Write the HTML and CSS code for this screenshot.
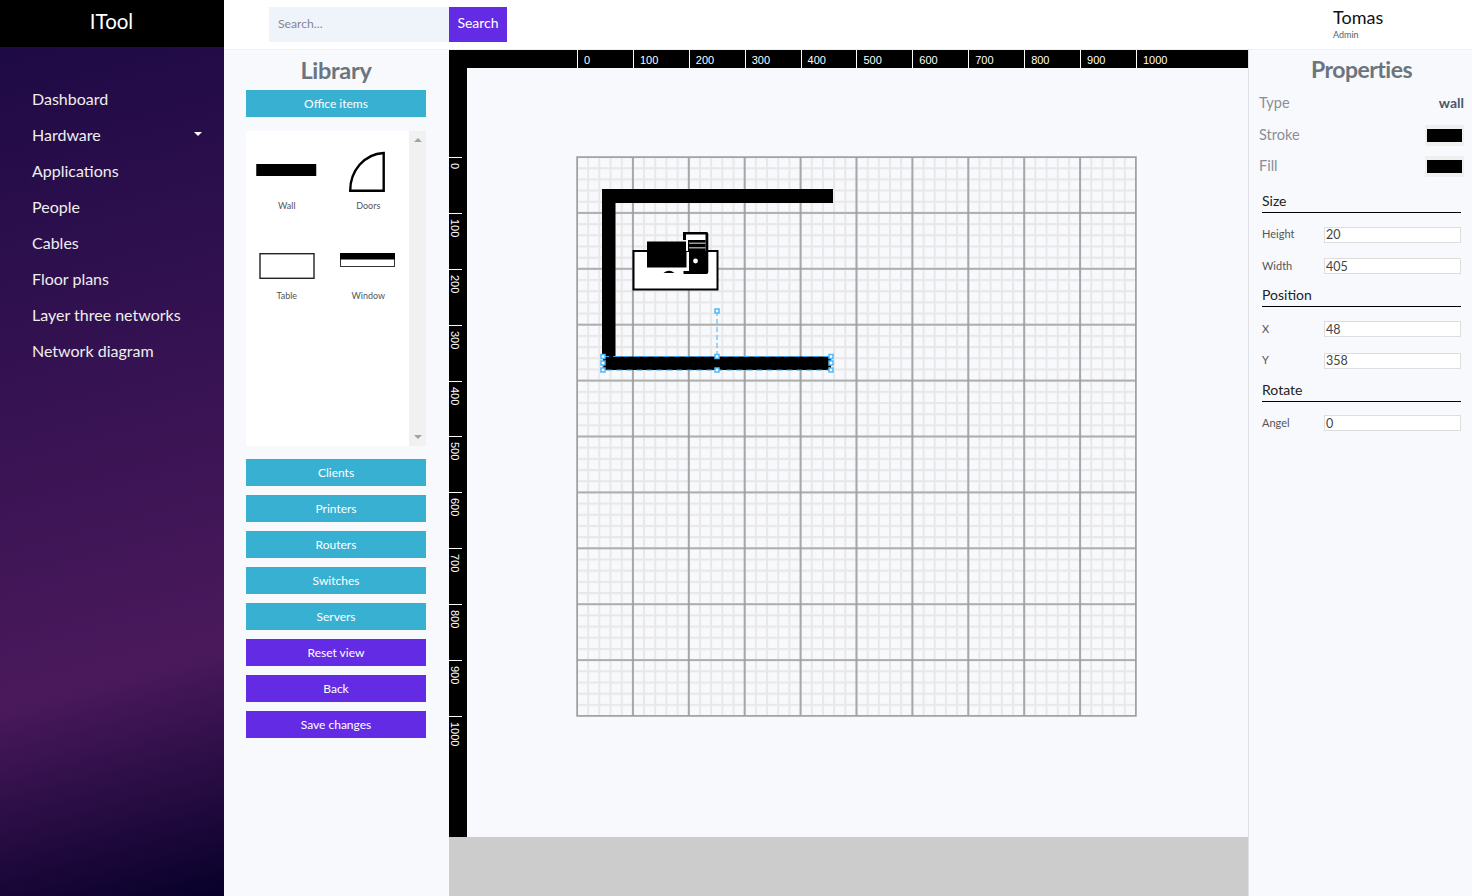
FILE: index.html
```html
<html>
	<head>
		<title>ITool - Floor plan</title>
		<link rel="stylesheet" href="styles.css">
	</head>
	<body>
		<div id="sidebar">
			<div class="brand">ITool</div>
			<ul class="nav">
				<li>Dashboard</li>
				<li class="has_caret">Hardware<span class="caret"></span></li>
				<li>Applications</li>
				<li>People</li>
				<li>Cables</li>
				<li>Floor plans</li>
				<li>Layer three networks</li>
				<li>Network diagram</li>
			</ul>
		</div>
		<div id="page">
			<div id="topbar">
				<div class="search">
					<input type="text" placeholder="Search...">
					<button>Search</button>
				</div>
				<div class="user">
					<div class="user_name">Tomas</div>
					<div class="user_role">Admin</div>
				</div>
			</div>
			<div id="main">
				<div id="library">
					<h2>Library</h2>
					<div class="btn btn_info">Office items</div>
					<div class="shapes">
						<div class="shape_grid">
							<div class="shape">
								<svg width="60" height="50"><rect x="-0.75" y="17" width="60" height="12"></rect></svg>
								<span>Wall</span>
							</div>
							<div class="shape">
								<svg width="60" height="50"><path d="M45.7 6 V43.7 H12.2 C12.2 24 26 7 45.7 6 Z" fill="#fff" stroke="#000" stroke-width="2.4"></path></svg>
								<span>Doors</span>
							</div>
							<div class="shape">
								<svg width="60" height="50"><rect x="3" y="16.7" width="54" height="24.6" fill="#fff" stroke="#222" stroke-width="1.4"></rect></svg>
								<span>Table</span>
							</div>
							<div class="shape">
								<svg width="60" height="50"><rect x="2.5" y="16.5" width="54" height="13" fill="#fff" stroke="#333"></rect><rect x="2" y="16" width="55" height="6.5"></rect></svg>
								<span>Window</span>
							</div>
						</div>
						<div class="scroller">
							<span class="arrow_up"></span>
							<span class="arrow_down"></span>
						</div>
					</div>
					<div class="btn_list">
						<div class="btn btn_info">Clients</div>
						<div class="btn btn_info">Printers</div>
						<div class="btn btn_info">Routers</div>
						<div class="btn btn_info">Switches</div>
						<div class="btn btn_info">Servers</div>
						<div class="btn btn_main">Reset view</div>
						<div class="btn btn_main">Back</div>
						<div class="btn btn_main">Save changes</div>
					</div>
				</div>
				<div id="editor">
					<div class="ruler_top">
						<span>0</span><span>100</span><span>200</span><span>300</span><span>400</span><span>500</span><span>600</span><span>700</span><span>800</span><span>900</span><span>1000</span>
					</div>
					<div class="editor_body">
						<div class="ruler_left">
							<span>0</span><span>100</span><span>200</span><span>300</span><span>400</span><span>500</span><span>600</span><span>700</span><span>800</span><span>900</span><span>1000</span>
						</div>
						<div class="stage">
							<svg class="board" width="781" height="769">
								<defs>
									<pattern id="minor" x="109" y="88" width="11.18" height="11.18" patternUnits="userSpaceOnUse">
										<path d="M0 1 H11.18 M1 0 V11.18" fill="none" stroke="#e8e8e8" stroke-width="2"></path>
									</pattern>
									<pattern id="major" x="109" y="88" width="55.9" height="55.9" patternUnits="userSpaceOnUse">
										<path d="M0 1 H55.9 M1 0 V55.9" fill="none" stroke="#9c9c9c" stroke-width="1.7"></path>
									</pattern>
								</defs>
								<rect x="110" y="89" width="559" height="559" fill="url(#minor)"></rect>
								<rect x="110" y="89" width="559" height="559" fill="url(#major)"></rect>
								<rect x="110" y="89" width="559" height="559" fill="none" stroke="#a0a0a0" stroke-width="1.5"></rect>

								<rect x="135" y="121" width="231" height="14"></rect>
								<rect x="135" y="121" width="13.5" height="168"></rect>

								<rect x="166.5" y="183" width="84" height="38.5" fill="#fff" stroke="#000" stroke-width="2"></rect>
								<rect x="180" y="173.5" width="39.5" height="26"></rect>
								<path d="M196.5 205 Q202 200.5 207.5 205 Z"></path>
								<rect x="219" y="166" width="20" height="17" fill="#fff"></rect>
								<path d="M216 164 H239.5 Q241.3 164 241.3 166 V204 Q241.3 206 239.5 206 H216.5 V203 H222 V183 H238.5 V166.5 H219 V172 H216 Z"></path>
								<rect x="221" y="172" width="17.5" height="11"></rect>
								<rect x="222" y="174.5" width="16.5" height="1.5" fill="#999"></rect>
								<rect x="222" y="179" width="16.5" height="1.5" fill="#999"></rect>
								<circle cx="228.5" cy="193" r="2.4" fill="#fff"></circle>

								<rect x="136" y="288.5" width="228" height="13.5"></rect>
								<rect class="sel_box" x="136" y="288.5" width="228" height="13.5"></rect>
								<line class="sel_line" x1="250" y1="243" x2="250" y2="288"></line>
								<rect class="handle" x="248" y="241" width="4" height="4"></rect>
								<rect class="handle" x="134" y="286.5" width="4" height="4"></rect>
								<rect class="handle" x="134" y="293" width="4" height="4"></rect>
								<rect class="handle" x="134" y="300" width="4" height="4"></rect>
								<rect class="handle" x="248" y="286.5" width="4" height="4"></rect>
								<rect class="handle" x="248" y="300" width="4" height="4"></rect>
								<rect class="handle" x="362" y="286.5" width="4" height="4"></rect>
								<rect class="handle" x="362" y="293" width="4" height="4"></rect>
								<rect class="handle" x="362" y="300" width="4" height="4"></rect>
							</svg>
						</div>
					</div>
					<div class="editor_foot"></div>
				</div>
				<div id="properties">
					<h2>Properties</h2>
					<div class="prop_row prop_first"><span>Type</span><strong>wall</strong></div>
					<div class="prop_row prop_stroke"><span>Stroke</span><i class="swatch"></i></div>
					<div class="prop_row prop_fill"><span>Fill</span><i class="swatch"></i></div>

					<div class="group_title">Size</div>
					<div class="field"><label>Height</label><input type="text" value="20"></div>
					<div class="field"><label>Width</label><input type="text" value="405"></div>

					<div class="group_title">Position</div>
					<div class="field"><label>X</label><input type="text" value="48"></div>
					<div class="field"><label>Y</label><input type="text" value="358"></div>

					<div class="group_title">Rotate</div>
					<div class="field"><label>Angel</label><input type="text" value="0"></div>
				</div>
			</div>
		</div>
	</body>
</html>
```

FILE: styles.css
```css
html,body{
	margin:0;
	height:896px;
	overflow:hidden;
	font-family:Lato,"Open Sans",sans-serif;
	background:#f8f9fc;
}
body{
	display:flex;
}
#sidebar{
	width:224px;
	flex:none;
	background:linear-gradient(165deg,#1b0944 0%,#4a195c 74%,#07002a 100%);
}
.brand{
	height:47px;
	line-height:43px;
	background:#000;
	color:#fff;
	font-size:20.5px;
	text-align:center;
	padding-right:1px;
}
.nav{
	list-style:none;
	margin:0;
	padding:34px 0 0 32px;
	color:#eee;
	font-size:16px;
}
.nav li{
	height:36px;
	line-height:36px;
	position:relative;
}
.caret{
	position:absolute;
	left:162px;
	top:15px;
	border:4px solid transparent;
	border-top-color:#fff;
	border-bottom:0;
}
#page{
	flex:1;
	display:flex;
	flex-direction:column;
	min-width:0;
}
#topbar{
	height:49px;
	background:#fff;
	border-bottom:1px solid #eef0f5;
	display:flex;
	justify-content:space-between;
}
.search{
	display:flex;
	margin:7px 0 0 45px;
	height:35px;
}
.search input{
	width:180px;
	box-sizing:border-box;
	border:0;
	padding:0 9px 3px;
	background:#eff3fa;
	font:12.2px Lato,sans-serif;
}
.search input::placeholder{
	color:#858796;
}
.search button{
	width:58px;
	border:0;
	padding:0 0 5px;
	background:#632ce4;
	color:#fff;
	font:14px Lato,sans-serif;
}
.user{
	width:139px;
	padding-top:7px;
	color:#111;
}
.user_name{
	font-size:18px;
	line-height:21px;
}
.user_role{
	font-size:9px;
	line-height:14px;
	color:#5a5c69;
}
#main{
	flex:1;
	display:flex;
	min-height:0;
}
#library{
	width:225px;
	flex:none;
	box-sizing:border-box;
	padding:0 23px 0 22px;
}
#library h2,#properties h2{
	margin:0;
	color:#6c757d;
	font-weight:700;
	line-height:40px;
	text-align:center;
}
#library h2{
	height:40px;
	font-size:23.5px;
	letter-spacing:-0.3px;
}
.btn{
	height:27px;
	line-height:28px;
	color:#fff;
	font-size:12px;
	text-align:center;
}
.btn_info{
	background:#38b0d2;
}
.btn_main{
	background:#632ce4;
}
.btn_list{
	display:flex;
	flex-direction:column;
	gap:9px;
}
.shapes{
	height:315px;
	margin:14px 0 13px;
	background:#fff;
	display:flex;
}
.shape_grid{
	flex:1;
	display:grid;
	grid-template-columns:1fr 1fr;
	grid-auto-rows:90px;
	padding-top:16px;
}
.shape{
	display:flex;
	flex-direction:column;
	align-items:center;
	color:#555;
	font-size:9px;
}
.shape svg{
	display:block;
	overflow:visible;
}
.shape span{
	margin-top:3px;
	line-height:12px;
}
.scroller{
	width:17px;
	background:#f1f1f1;
	display:flex;
	flex-direction:column;
	justify-content:space-between;
	align-items:center;
	padding:7px 0;
}
.arrow_up,.arrow_down{
	border:4px solid transparent;
}
.arrow_up{
	border-bottom-color:#a3a3a3;
	border-top:0;
}
.arrow_down{
	border-top-color:#a3a3a3;
	border-bottom:0;
}
#editor{
	width:799px;
	flex:none;
	display:flex;
	flex-direction:column;
}
.ruler_top{
	height:18px;
	background:#000;
	display:flex;
	padding-left:128px;
}
.ruler_top span,.ruler_left span{
	box-sizing:border-box;
	color:#fff;
	font:11px "Liberation Sans",Arial,sans-serif;
}
.ruler_top span{
	width:55.9px;
	border-left:1px solid #fff;
	padding:4px 0 0 6px;
	line-height:12px;
}
.editor_body{
	height:769px;
	display:flex;
}
.ruler_left{
	width:18px;
	flex:none;
	background:#000;
	box-sizing:border-box;
	padding-top:89px;
}
.ruler_left span{
	display:block;
	height:55.9px;
	border-top:1px solid #fff;
	writing-mode:vertical-rl;
	padding:5px 1px 0 0;
	line-height:12px;
}
.stage{
	flex:1;
	background:#f8f9fc;
}
.board{
	display:block;
}
.sel_box{
	fill:none;
	stroke:#2aa7f2;
	stroke-width:1;
	stroke-dasharray:6 4;
}
.sel_line{
	stroke:#7cc8f8;
	stroke-width:1.5;
	stroke-dasharray:5 3;
}
.handle{
	fill:#fff;
	stroke:#51b7f5;
	stroke-width:1.5;
}
.editor_foot{
	flex:1;
	background:#ccc;
}
#properties{
	flex:1;
	border-left:1px solid #dfe1e6;
	box-sizing:border-box;
	padding:0 8px 0 10px;
	margin-top:-1px;
}
#properties h2{
	height:40px;
	font-size:23px;
	letter-spacing:-0.5px;
}
.prop_row{
	display:flex;
	justify-content:space-between;
	align-items:center;
	color:#8a8d99;
	font-size:14.5px;
}
.prop_row strong{
	color:#4f5666;
	font-size:14px;
	font-weight:700;
}
.prop_first{
	height:26px;
}
.prop_stroke{
	height:21px;
	margin-top:10px;
}
.prop_stroke span,.prop_fill span{
	padding-bottom:2px;
}
.prop_fill{
	height:21px;
	margin-top:10px;
	margin-bottom:10.7px;
}
.swatch{
	width:39px;
	height:21px;
	box-sizing:border-box;
	background:#000;
	border:solid #efefef;
	border-width:4px 2px;
}
.group_title{
	margin:-0.7px 3px 6px;
	height:25px;
	line-height:28px;
	border-bottom:1px solid #000;
	color:#222;
	font-size:14px;
}
.field{
	display:flex;
	align-items:center;
	height:31.5px;
	margin-left:3px;
	margin-right:3px;
	color:#555;
	font-size:11px;
}
.field label{
	width:62px;
	flex:none;
	padding-bottom:2px;
}
.field input{
	width:137px;
	height:16px;
	box-sizing:border-box;
	border:1px solid #ddd;
	padding:0 1px;
	background:#fff;
	color:#444;
	font:12.5px Lato,sans-serif;
}
```
